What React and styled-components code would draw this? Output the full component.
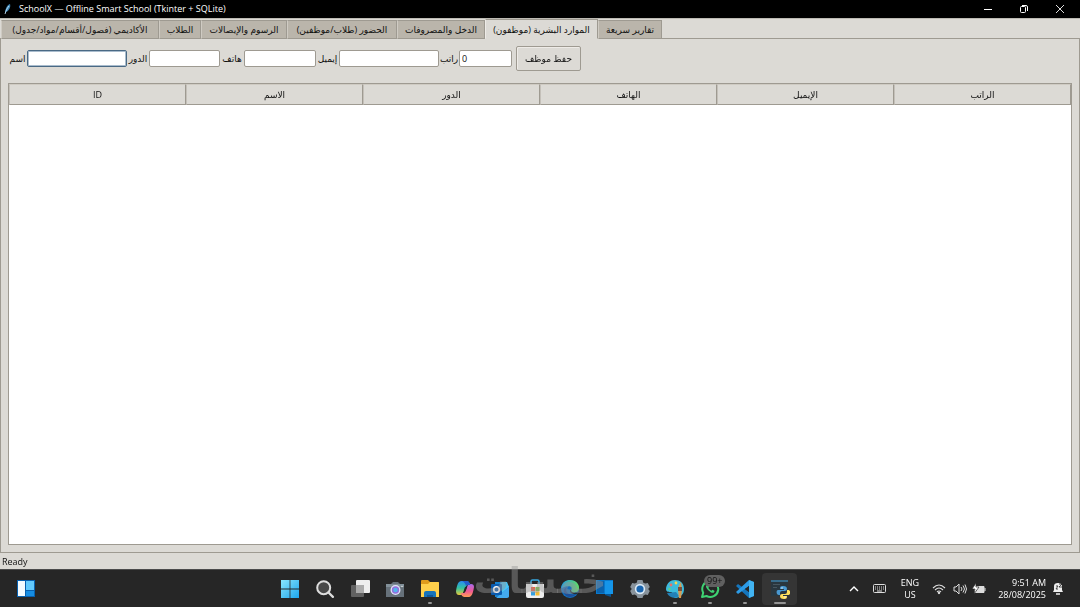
import React, { useState } from 'react';
import styled, { createGlobalStyle } from 'styled-components';

const GlobalStyle = createGlobalStyle`
  * { box-sizing: border-box; }
  body {
    margin: 0;
    background: #dcdad5;
    color: #111;
    font: 9px/12px "Open Sans", "DejaVu Sans", sans-serif;
  }
  button, input { font: inherit; color: inherit; }
`;

const Screen = styled.div`
  display: flex;
  flex-direction: column;
  height: 100vh;
  min-height: 300px;
  overflow: hidden;
`;

const TitleBar = styled.header`
  display: flex;
  align-items: center;
  flex: none;
  height: 18px;
  padding-left: 3px;
  gap: 7px;
  background: #000;
  color: #fff;
`;

const Title = styled.h1`
  flex: 1;
  margin: 0;
  font: inherit;
  white-space: nowrap;
`;

const WindowButton = styled.button`
  display: flex;
  align-items: center;
  justify-content: center;
  width: 36px;
  height: 18px;
  padding: 0;
  border: 0;
  background: none;
`;

const WindowButtons = styled.div`
  display: flex;
  padding-right: 2px;
`;

const TabBar = styled.div`
  display: flex;
  align-items: flex-end;
  flex: none;
  height: 21px;
  padding-left: 1px;
  border-top: 1px solid #bdbab3;
  box-shadow: inset 0 -1px #9e9a91;
`;

const Tab = styled.button`
  width: ${(p) => p.$width}px;
  height: ${(p) => (p.$active ? 20 : 19)}px;
  padding: ${(p) => (p.$active ? '2px 0 0' : '1px 0 0')};
  border: 1px solid #9e9a91;
  border-left-color: ${(p) => (p.$active ? '#eeebe7' : '#cfcbc3')};
  border-bottom-color: ${(p) => (p.$active ? '#dcdad5' : '#9e9a91')};
  background: ${(p) => (p.$active ? '#dcdad5' : '#bab5ab')};
  white-space: nowrap;
`;

const Pane = styled.main`
  display: flex;
  flex-direction: column;
  flex: 1;
  min-height: 0;
  padding: 7px;
  border: 1px solid #9e9a91;
  border-top: 0;
`;

const Form = styled.form`
  display: flex;
  align-items: center;
  height: 25px;
  margin-bottom: 12px;
`;

const Label = styled.label`
  width: ${(p) => p.$width}px;
  text-align: center;
  white-space: nowrap;
`;

const Entry = styled.input`
  width: ${(p) => p.$width}px;
  height: 17px;
  padding: 0 2px;
  border: 1px solid #9e9a91;
  border-radius: 2px;
  outline: none;
  background: #fff;

  &:focus {
    border-color: #4a6984;
    box-shadow: inset 0 0 0 1px #a9bccd;
  }
`;

const SaveButton = styled.button`
  width: 65px;
  height: 25px;
  margin-left: 4px;
  padding: 0;
  border: 1px solid #9e9a91;
  border-radius: 2px;
  background: #dcdad5;
  box-shadow: inset 1px 1px #eeebe7;
`;

const TreeFrame = styled.div`
  flex: 1;
  min-height: 0;
  border: 1px solid #9e9a91;
  background: #fff;
`;

const Tree = styled.table`
  width: 100%;
  table-layout: fixed;
  border-collapse: separate;
  border-spacing: 0;
`;

const Heading = styled.th`
  height: 21px;
  padding: 0;
  border: 1px solid #9e9a91;
  border-left-color: #c4c0b9;
  border-top-color: #cfcbc3;
  background: #dcdad5;
  font-weight: 400;
`;

const StatusBar = styled.div`
  flex: none;
  height: 16px;
  padding: 3px 2px 1px;
`;

const Taskbar = styled.footer`
  position: relative;
  display: grid;
  grid-template-columns: 1fr auto 1fr;
  align-items: center;
  flex: none;
  height: 38px;
  border-top: 1px solid #4b4b4b;
  background: #262626;
  color: #fff;
`;

const Watermark = styled.div`
  position: absolute;
  left: 50%;
  bottom: 6px;
  transform: translateX(-50%);
  color: rgba(150, 150, 150, 0.45);
  font: 700 35px/40px "DejaVu Sans", sans-serif;
  pointer-events: none;
`;

const Widgets = styled.div`
  padding-left: 8px;
`;

const Apps = styled.nav`
  display: flex;
  padding-right: 11px;
`;

const AppButton = styled.button`
  position: relative;
  display: flex;
  align-items: center;
  justify-content: center;
  width: 35px;
  height: 32px;
  padding: 0;
  border: 0;
  border-radius: 4px;
  background: ${(p) => (p.$active ? '#353535' : 'none')};

  &::after {
    content: "";
    position: absolute;
    bottom: 1px;
    width: ${(p) => (p.$active ? 12 : 4)}px;
    height: 2px;
    border-radius: 1px;
    background: ${(p) => (p.$running ? '#959595' : 'none')};
  }
`;

const Badge = styled.span`
  position: absolute;
  top: 2px;
  left: 12px;
  padding: 0 3px;
  border-radius: 6px;
  background: #606060;
  color: #111;
`;

const Tray = styled.div`
  display: flex;
  align-items: center;
  justify-content: flex-end;
  padding-right: 16px;
`;

const TrayItem = styled.div`
  display: flex;
  justify-content: center;
  width: ${(p) => p.$width}px;
  text-align: center;
`;

const Clock = styled.div`
  width: 57px;
  margin-right: 6px;
  text-align: right;
  white-space: nowrap;
`;

const FeatherIcon = () => (
  <svg width="9" height="12" viewBox="0 0 9 12">
    <path d="M2 11C2 6 4 2 7 1c1 3-1 7-4 8" fill="#3f87b8" />
    <path d="M2 11C3 7 5 4 6 3" stroke="#d5ecfa" strokeWidth=".8" fill="none" />
  </svg>
);

const icons = {
  start: (
    <>
      <defs>
        <linearGradient id="win" x2="1" y2="1"><stop stopColor="#8ae6fc" /><stop offset="1" stopColor="#1ca5ed" /></linearGradient>
      </defs>
      <path d="M1 1h8.6v8.6H1zM10.4 1H19v8.6h-8.6zM1 10.4h8.6V19H1zM10.4 10.4H19V19h-8.6z" fill="url(#win)" />
    </>
  ),
  search: (
    <>
      <circle cx="8.7" cy="8.7" r="6.5" fill="#484848" stroke="#ddd" strokeWidth="2" />
      <path d="m13.5 13.5 4.4 4.4" stroke="#ddd" strokeWidth="2.3" strokeLinecap="round" />
    </>
  ),
  tasks: (
    <>
      <rect x="6" y="1" width="14" height="13" rx="1" fill="#eee" />
      <rect x="1" y="6" width="13" height="12" rx="1" fill="#666" opacity=".92" />
      <path d="M6 6h8v8H6z" fill="#aaa" />
    </>
  ),
  camera: (
    <>
      <path d="M1 5h5l2-2h5l2 2h4v13H1z" fill="#66717a" />
      <path d="M1 5h18v3H1z" fill="#829099" />
      <circle cx="10.5" cy="11" r="5" fill="#e3e5fb" />
      <circle cx="10.5" cy="11" r="3.7" fill="#9270db" />
      <circle cx="10.5" cy="11" r="2.2" fill="#53b6ee" />
      <circle cx="17" cy="7.5" r=".8" fill="#ddd" />
    </>
  ),
  folder: (
    <>
      <path d="M1 2q0-1 1-1h6l2 2h8q1 0 1 1v5H1z" fill="#e09c1c" />
      <path d="M1 5h7l2-2h8q1 0 1 1v14H1z" fill="#ffd04b" />
      <path d="M4 18v-4q0-2 2-2h8q2 0 2 2v4z" fill="#1673bb" />
      <path d="M7 16h6v2H7z" fill="#0d559a" />
    </>
  ),
  copilot: (
    <>
      <defs>
        <linearGradient id="copA" x2="0" y2="1"><stop stopColor="#2a8df3" /><stop offset=".5" stopColor="#33c2a0" /><stop offset="1" stopColor="#e7c938" /></linearGradient>
        <linearGradient id="copB" x2="0" y2="1"><stop stopColor="#ac6aed" /><stop offset=".55" stopColor="#f05993" /><stop offset="1" stopColor="#ff9d54" /></linearGradient>
      </defs>
      <path d="M7 2h5q2 0 3 3l.5 1H13q-2 0-3 3l-1.5 5Q8 16 6 16H4q-3 0-3-4 1-7 3-9 1-1 3-1z" fill="url(#copA)" />
      <path d="M14 18H9q-2 0-3-3l-.4-1H8q2 0 3-3l1.5-4Q13 5 15 5h1q3 0 3 3-1 7-3 9-1 1-2 1z" fill="url(#copB)" />
      <path d="M7 2h5q2 0 3 3l.5 1H13q-1 0-2 1Q10 3 7 2z" fill="#235dcc" />
      <path d="m10 8-2 6h1q1 0 2-3l1-3z" fill="#262626" />
    </>
  ),
  outlook: (
    <>
      <path d="M5 3h11l3 5v10H5z" fill="#1682d1" />
      <path d="m6 9 6-6h5l2 5-7 6z" fill="#48c4f5" />
      <path d="M19 8v9q0 2-2 2H6z" fill="#43aaf0" />
      <rect x="1" y="5" width="11" height="11" rx="1" fill="#0b5aad" />
      <circle cx="6.5" cy="10.5" r="2.8" fill="none" stroke="#fff" strokeWidth="1.6" />
    </>
  ),
  store: (
    <>
      <path d="M6 6V2.5Q6 1 7.5 1h5Q14 1 14 2.5V6" fill="none" stroke="#38a8e0" strokeWidth="1.5" />
      <path d="M1 5h18v12q0 2-2 2H3q-2 0-2-2z" fill="#eee" />
      <path d="M6 8h4v4H6z" fill="#ef6044" />
      <path d="M10.5 8h4v4h-4z" fill="#78b943" />
      <path d="M6 12.5h4v4H6z" fill="#329fe2" />
      <path d="M10.5 12.5h4v4h-4z" fill="#f3bb31" />
    </>
  ),
  edge: (
    <>
      <defs><linearGradient id="edg" x2="1"><stop stopColor="#229cdf" /><stop offset="1" stopColor="#64da65" /></linearGradient></defs>
      <circle cx="10" cy="10" r="9" fill="#126fbd" />
      <path d="M1 9C2 3 6 1 10 1c6 0 9 4 9 8 0 5-7 6-8 3 2-2 1-5-2-5-4 0-6 2-8 2z" fill="url(#edg)" />
      <path d="M7 8c-3 5 2 9 9 7-3 4-10 4-12-1-1-3 0-5 3-6z" fill="#1d4f99" />
      <path d="M11 12c2 3 8 1 8 1l-2 2c-4 1-7-1-7-3 0-2 1-2 1 0z" fill="#262f36" />
    </>
  ),
  windows: (
    <>
      <path d="M1 1h17v14H1z" fill="#0879cd" />
      <path d="M2 2h7v12H2z" fill="#0a62ad" />
      <path d="M10 2h8v13h-8z" fill="#1595e9" />
      <path d="M10 15h6v3l-6-2z" fill="#075593" />
    </>
  ),
  settings: (
    <>
      <path d="m7.5 1 5 0 .8 2.7 2 .9 2.5-.7 2 4-1.600 2.100 1.600 2.100-2 4-2.500-.6-2 1.200-.8 2.300h-5l-.8-2.300-2-1.200-2.500.6-2-4L1.800 10 .2 7.900l2-4 2.500.7 2-.9z" fill="#88939c" />
      <circle cx="10" cy="10" r="5.2" fill="#d9e9f6" />
      <circle cx="10" cy="10" r="3.6" fill="#1864ae" />
    </>
  ),
  paint: (
    <>
      <path d="M10 1C4 1 1 6 1 10c0 3 3 3 5 3 3 0 0 6 5 6 5-1 8-4 8-9 0-6-4-9-9-9z" fill="#3cbbdc" />
      <path d="M2 14c2 5 9 6 12 3l-3-4z" fill="#2380b7" />
      <circle cx="6" cy="6" r="1.4" fill="#e8736c" />
      <circle cx="11" cy="4" r="1.4" fill="#f8d54e" />
      <circle cx="4.5" cy="10" r="1.3" fill="#5fd084" />
      <path d="m13 11 1-5 2-3 1 8-1 8h-2z" fill="#d79a51" />
      <path d="M13 8h4v4h-4z" fill="#794f3c" />
    </>
  ),
  whatsapp: (
    <>
      <path d="m2 18 1.2-4.3A8 8 0 1 1 6.5 17z" fill="#262626" stroke="#3ed273" strokeWidth="2" strokeLinejoin="round" />
      <path d="M6.8 5.500c-1.200 1-1.200 3 1.500 5.700s5 3.300 6 1.700c.7-1-.1-1.300-1.900-2.200l-1 1c-1-.2-2.700-1.800-3-2.900l.8-1c-.6-1.800-1.200-2.700-2.400-2.300z" fill="#3ed273" />
    </>
  ),
  vscode: (
    <>
      <path d="m14 1 5 2v14l-5 2L1 7l2-2 11 8z" fill="#1576bd" />
      <path d="M14 1v6L3 15l-2-2z" fill="#2c9be6" />
      <path d="m14 1 5 2v14l-5 2z" fill="#42b4f2" />
      <path d="M14 7v6l-4-3z" fill="#262626" />
    </>
  ),
  python: (
    <>
      <path d="M1 1h17v16H1z" fill="#29373f" />
      <path d="M1 1h17v2H1z" fill="#376c8b" />
      <path d="M3 5.500h7M3 8.500h4" stroke="#47565e" />
      <path d="M13 7c-3 0-3 1-3 3h4v1H8c-2 0-2 5 1 5h1v-2q0-2 2-2h3q2 0 2-2c0-2-1-3-4-3z" fill="#4999d2" />
      <path d="M14 20c3 0 3-1 3-3h-4v-1h5c3 0 3-5 0-5h-1v2q0 2-2 2h-3q-2 0-2 2c0 2 1 3 4 3z" fill="#ffe05c" />
      <circle cx="12" cy="9" r=".7" fill="#fff" />
      <circle cx="15" cy="18" r=".7" fill="#fff" />
    </>
  ),
};

const tabs = [
  { name: 'الأكاديمي (فصول/أقسام/مواد/جدول)', width: 158 },
  { name: 'الطلاب', width: 42 },
  { name: 'الرسوم والإيصالات', width: 86 },
  { name: 'الحضور (طلاب/موظفين)', width: 110 },
  { name: 'الدخل والمصروفات', width: 88 },
  { name: 'الموارد البشرية (موظفون)', width: 113 },
  { name: 'تقارير سريعة', width: 64 },
];

const fields = [
  { id: 'name', label: 'اسم', labelWidth: 19, width: 100 },
  { id: 'role', label: 'الدور', labelWidth: 22, width: 71 },
  { id: 'phone', label: 'هاتف', labelWidth: 24, width: 72 },
  { id: 'email', label: 'إيميل', labelWidth: 23, width: 100 },
  { id: 'salary', label: 'راتب', labelWidth: 20, width: 53, value: '0' },
];

const columns = ['ID', 'الاسم', 'الدور', 'الهاتف', 'الإيميل', 'الراتب'];

const apps = [
  { name: 'Start', icon: 'start' },
  { name: 'Search', icon: 'search' },
  { name: 'Task view', icon: 'tasks' },
  { name: 'Camera', icon: 'camera' },
  { name: 'File Explorer', icon: 'folder', running: true },
  { name: 'Copilot', icon: 'copilot' },
  { name: 'Outlook', icon: 'outlook' },
  { name: 'Store', icon: 'store' },
  { name: 'Edge', icon: 'edge' },
  { name: 'Windows', icon: 'windows' },
  { name: 'Settings', icon: 'settings' },
  { name: 'Paint', icon: 'paint', running: true },
  { name: 'WhatsApp', icon: 'whatsapp', running: true, badge: '99+' },
  { name: 'VS Code', icon: 'vscode', running: true },
  { name: 'Python', icon: 'python', running: true, active: true },
];

const App = () => {
  const [activeTab, setActiveTab] = useState(5);

  return (
    <>
      <GlobalStyle />
      <Screen>
        <TitleBar>
          <FeatherIcon />
          <Title>SchoolX — Offline Smart School (Tkinter + SQLite)</Title>
          <WindowButtons>
            <WindowButton aria-label="Minimize">
              <svg width="10" height="10"><path d="M1 5.5h8" stroke="#fff" /></svg>
            </WindowButton>
            <WindowButton aria-label="Restore">
              <svg width="10" height="10" fill="none" stroke="#fff">
                <rect x="1.5" y="2.5" width="5" height="6" rx="1" />
                <path d="M3 1.5h4q1.5 0 1.5 1.5v4" />
              </svg>
            </WindowButton>
            <WindowButton aria-label="Close">
              <svg width="10" height="10"><path d="m1 1 8 8M9 1 1 9" stroke="#ddd" /></svg>
            </WindowButton>
          </WindowButtons>
        </TitleBar>

        <TabBar role="tablist">
          {tabs.map((tab, i) => (
            <Tab
              key={tab.name}
              role="tab"
              dir="rtl"
              aria-selected={i === activeTab}
              $active={i === activeTab}
              $width={tab.width}
              onClick={() => setActiveTab(i)}
            >
              {tab.name}
            </Tab>
          ))}
        </TabBar>

        <Pane>
          <Form onSubmit={(e) => e.preventDefault()}>
            {fields.map((field) => (
              <React.Fragment key={field.id}>
                <Label htmlFor={field.id} $width={field.labelWidth}>{field.label}</Label>
                <Entry id={field.id} $width={field.width} defaultValue={field.value} autoFocus={field.id === 'name'} />
              </React.Fragment>
            ))}
            <SaveButton>حفظ موظف</SaveButton>
          </Form>
          <TreeFrame>
            <Tree>
              <thead>
                <tr>
                  {columns.map((name) => <Heading key={name} scope="col">{name}</Heading>)}
                </tr>
              </thead>
            </Tree>
          </TreeFrame>
        </Pane>
        <StatusBar>Ready</StatusBar>

        <Taskbar>
          <Widgets>
            <AppButton aria-label="Widgets">
              <svg width="20" height="20" viewBox="0 0 20 20">
                <path d="M1 1h18v17H1z" fill="#0860ae" />
                <path d="M2 2h7v15H2z" fill="#f4fbff" />
                <path d="M10 2h8v9h-8z" fill="#62c9fc" />
                <path d="M10 12h8v5h-8z" fill="#168de2" />
              </svg>
            </AppButton>
          </Widgets>
          <Apps>
            {apps.map((app) => (
              <AppButton key={app.name} aria-label={app.name} $running={app.running} $active={app.active}>
                <svg width="20" height="20" viewBox="0 0 20 20">{icons[app.icon]}</svg>
                {app.badge && <Badge>{app.badge}</Badge>}
              </AppButton>
            ))}
          </Apps>
          <Tray>
            <TrayItem $width={26}>
              <svg width="10" height="8"><path d="m1 6 4-4 4 4" fill="none" stroke="#fff" strokeWidth="1.4" /></svg>
            </TrayItem>
            <TrayItem $width={26}>
              <svg width="14" height="10" fill="none" stroke="#ddd">
                <rect x=".5" y=".5" width="12" height="8" rx="1" />
                <path d="M2 3h9M2 5h9" strokeDasharray="1 1" />
                <path d="M4 7h5" />
              </svg>
            </TrayItem>
            <TrayItem $width={34}>ENG<br />US</TrayItem>
            <TrayItem $width={24}>
              <svg width="14" height="12" fill="none" stroke="#ddd" strokeWidth="1.1">
                <path d="M1 5q6-6 12 0M3 7q4-4 8 0M5 9q2-2 4 0" />
                <circle cx="7" cy="10" r=".6" fill="#fff" />
              </svg>
            </TrayItem>
            <TrayItem $width={18}>
              <svg width="14" height="12" fill="none" stroke="#ddd">
                <path d="M1 4h2l3-3v10L3 8H1zM8 4q2 2 0 4M10 2.5q3 3.5 0 7M12 1.5q3 4.5 0 9" />
              </svg>
            </TrayItem>
            <TrayItem $width={20}>
              <svg width="14" height="12">
                <path d="M3 3.5h9v6H3z" fill="#ddd" stroke="#ddd" />
                <path d="M13 5v3" stroke="#ddd" />
                <path d="M4 0 0 6h3l-1 5 5-7H4z" fill="#fff" stroke="#262626" strokeWidth=".7" />
              </svg>
            </TrayItem>
            <Clock>9:51 AM<br />28/08/2025</Clock>
            <svg width="12" height="14" viewBox="0 0 12 14">
              <path d="M1 10 2 8V4q0-3 4-3t4 3v4l1 2z" fill="#eee" />
              <path d="M4 12h4" stroke="#eee" strokeWidth="1.5" />
              <path d="M4 4h2L4 7h2M7 2h3L7 5h3" stroke="#262626" fill="none" strokeWidth=".8" />
            </svg>
          </Tray>
          <Watermark lang="ar">خمسات</Watermark>
        </Taskbar>
      </Screen>
    </>
  );
};

export default App;
